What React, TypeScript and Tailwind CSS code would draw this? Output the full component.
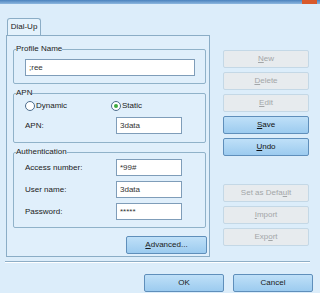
import React from 'react';

// Dial-Up profile dialog (XP style)

const Mn: React.FC<{ pre?: string; u: string; post?: string }> = ({ pre = '', u, post = '' }) => (
  <span>
    {pre}
    <span className="underline underline-offset-1">{u}</span>
    {post}
  </span>
);

const SideButton: React.FC<{ active?: boolean; children: React.ReactNode }> = ({ active, children }) => (
  <button
    className={`w-[86px] h-[18px] flex items-center justify-center rounded-[2px] border ${
      active
        ? 'border-[#5f8fbb] bg-gradient-to-b from-[#bfe0f8] to-[#9ccbef] text-[#111]'
        : 'border-[#c4d8e6] bg-[#e7ebee] text-[#a3a6a8]'
    }`}
  >
    {children}
  </button>
);

const Field: React.FC<{ value: string; className?: string }> = ({ value, className = '' }) => (
  <div className={`h-[17px] bg-white border border-[#7f9db9] flex items-center px-[3px] text-[#333] ${className}`}>
    {value}
  </div>
);

const Group: React.FC<{ title: string; className?: string; children: React.ReactNode }> = ({ title, className = '', children }) => (
  <fieldset className={`border border-[#90b2c9] rounded-[2px] ${className}`}>
    <legend className="ml-[2px] leading-[10px] text-[#222]">{title}</legend>
    {children}
  </fieldset>
);

const Radio: React.FC<{ checked?: boolean; label: string }> = ({ checked, label }) => (
  <div className="flex items-center gap-[1px] h-[10px]">
    <span className="w-[10px] h-[10px] rounded-full border border-[#4d6d8d] bg-white flex items-center justify-center">
      {checked && <span className="w-[4px] h-[4px] rounded-full bg-[#3faa3f]" />}
    </span>
    <span>{label}</span>
  </div>
);

const App: React.FC = () => {
  return (
    <div className="w-[320px] h-[293px] bg-[#dcedfa] overflow-hidden text-[8px] text-[#1a1a1a] font-['Liberation_Sans',Arial,sans-serif] leading-none">
      {/* title bar edge */}
      <div className="h-[4px] bg-gradient-to-b from-[#4a82bd] to-[#8eb8df] flex justify-end">
        <div className="w-[15px] h-[4px] bg-[#d95a2b] mr-[3px]" />
      </div>

      <div className="flex pt-[14px] pl-[6px]">
        {/* left: tab + panel */}
        <div className="w-[204px] flex flex-col">
          <div className="ml-[1px] w-[34px] h-[17px] border border-b-0 border-[#8badc6] rounded-t-[3px] bg-[#e4f2fc] flex items-center justify-center">
            Dial-Up
          </div>
          <div className="h-[222px] border border-[#8badc6] bg-[#e0effb] pt-[8px] pl-[6px] pr-[3px] flex flex-col gap-[4px]">
            <Group title="Profile Name">
              <div className="px-[11px] pr-[10px] pt-[5px] pb-[7px]">
                <Field value=";ree" />
              </div>
            </Group>

            <Group title="APN">
              <div className="pl-[11px] pt-[3px] pb-[8px]">
                <div className="flex">
                  <div className="w-[86px]">
                    <Radio label="Dynamic" />
                  </div>
                  <Radio checked label="Static" />
                </div>
                <div className="flex items-center mt-[6px]">
                  <span className="w-[91px]">APN:</span>
                  <Field value="3data" className="w-[66px]" />
                </div>
              </div>
            </Group>

            <Group title="Authentication">
              <div className="pl-[11px] pt-[2px] pb-[7px] flex flex-col gap-[5px]">
                <div className="flex items-center">
                  <span className="w-[91px]">Access number:</span>
                  <Field value="*99#" className="w-[66px]" />
                </div>
                <div className="flex items-center">
                  <span className="w-[91px]">User name:</span>
                  <Field value="3data" className="w-[66px]" />
                </div>
                <div className="flex items-center">
                  <span className="w-[91px]">Password:</span>
                  <Field value="*****" className="w-[66px]" />
                </div>
              </div>
            </Group>

            <div className="flex justify-end mt-[4px] -mr-[1px]">
              <button className="w-[81px] h-[18px] rounded-[2px] border border-[#5f8fbb] bg-gradient-to-b from-[#bfe0f8] to-[#9ccbef] flex items-center justify-center">
                <Mn u="A" post="dvanced..." />
              </button>
            </div>
          </div>
        </div>

        {/* right: action buttons */}
        <div className="ml-[13px] pt-[32px] flex flex-col gap-[4px]">
          <SideButton><Mn u="N" post="ew" /></SideButton>
          <SideButton><Mn u="D" post="elete" /></SideButton>
          <SideButton><Mn u="E" post="dit" /></SideButton>
          <SideButton active><Mn u="S" post="ave" /></SideButton>
          <SideButton active><Mn u="U" post="ndo" /></SideButton>
          <div className="mt-[24px] flex flex-col gap-[4px]">
            <SideButton><Mn pre="Set as Defa" u="u" post="lt" /></SideButton>
            <SideButton><Mn u="I" post="mport" /></SideButton>
            <SideButton><Mn pre="Exp" u="o" post="rt" /></SideButton>
          </div>
        </div>
      </div>

      {/* separator */}
      <div className="mt-[4px] ml-[5px] w-[305px] h-[2px] border-t border-[#8eaec6] border-b border-b-white" />

      <div className="flex justify-end gap-[9px] pr-[7px] mt-[11px]">
        <button className="w-[80px] h-[18px] rounded-[2px] border border-[#5f8fbb] bg-gradient-to-b from-[#bfe0f8] to-[#9ccbef] flex items-center justify-center">
          OK
        </button>
        <button className="w-[80px] h-[18px] rounded-[2px] border border-[#5f8fbb] bg-gradient-to-b from-[#bfe0f8] to-[#9ccbef] flex items-center justify-center">
          Cancel
        </button>
      </div>
    </div>
  );
};

export default App;
